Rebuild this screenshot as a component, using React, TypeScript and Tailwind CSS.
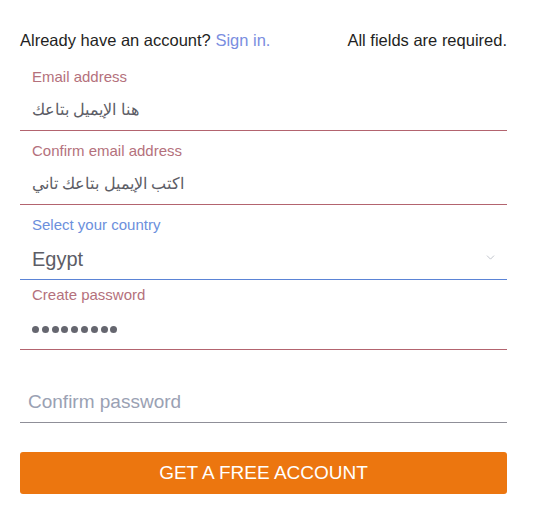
import { ChevronDown } from 'lucide-react'

const font = { fontFamily: '"Liberation Sans", Arial, sans-serif' }

// 필드 하나: 라벨 + 값 + 밑줄
function Field({
  label,
  value,
  tone,
  dir,
  top = 'pt-[11px]',
  gap = 'mt-[12px]',
  valueClass = 'text-[16px] text-[#5c5d66]',
  extra,
}: {
  label?: string
  value: React.ReactNode
  tone: 'red' | 'blue' | 'gray'
  dir?: 'rtl'
  top?: string
  gap?: string
  valueClass?: string
  extra?: React.ReactNode
}) {
  const border = tone === 'red' ? 'border-[#b3646f]' : tone === 'blue' ? 'border-[#5b84d6]' : 'border-[#8f8f98]'
  const labelColor = tone === 'blue' ? 'text-[#6c8fdc]' : 'text-[#b4717c]'
  return (
    <div className={`relative border-b ${border} ${top} pb-[8px] pl-[12px] pr-[12px]`}>
      {label && <div className={`text-[15px] leading-[18px] ${labelColor}`}>{label}</div>}
      <div className={`${label ? gap : ''} flex h-[24px] items-center leading-[24px] ${valueClass}`}>
        <span dir={dir}>{value}</span>
      </div>
      {extra}
    </div>
  )
}

// 비밀번호 마스킹 점 9개
function Dots() {
  return (
    <span className="flex gap-[2.8px]" aria-label="password">
      {Array.from({ length: 9 }).map((_, i) => (
        <span key={i} className="block h-[7px] w-[7px] rounded-full bg-[#65666f]" />
      ))}
    </span>
  )
}

export default function App() {
  return (
    <div className="min-h-[513px] w-[533px] bg-white pt-[30px]" style={font}>
      <div className="ml-5 w-[487px]">
        <div className="flex h-[20px] items-center justify-between text-[16.5px] leading-[20px] text-[#1f1f23]">
          <span>
            Already have an account? <span className="text-[#7a8ee0]">Sign in.</span>
          </span>
          <span>All fields are required.</span>
        </div>

        <div className="mt-[7px]">
          <Field label="Email address" value="هنا الإيميل بتاعك" tone="red" dir="rtl" />
          <Field label="Confirm email address" value="اكتب الإيميل بتاعك تاني" tone="red" dir="rtl" />
          <Field
            label="Select your country"
            value="Egypt"
            tone="blue"
            gap="mt-[13px]"
            valueClass="text-[20px] text-[#5c5d66]"
            extra={
              <ChevronDown
                className="absolute right-[10px] top-[46px] h-[13px] w-[13px] text-[#b3b7c0]"
                strokeWidth={1.5}
              />
            }
          />
          <Field label="Create password" value={<Dots />} tone="red" top="pt-[6px]" gap="mt-[13px]" />
          <div className="border-b border-[#8f8f98] pb-[8px] pl-[8px] pt-[40px]">
            <div className="h-[24px] text-[19px] leading-[24px] text-[#9aa1b3]">Confirm password</div>
          </div>
        </div>

        <button
          type="button"
          className="mt-[29px] flex h-[42px] w-full items-center justify-center rounded-[3px] bg-[#ec760f] text-[19px] text-white"
        >
          GET A FREE ACCOUNT
        </button>
      </div>
    </div>
  )
}
